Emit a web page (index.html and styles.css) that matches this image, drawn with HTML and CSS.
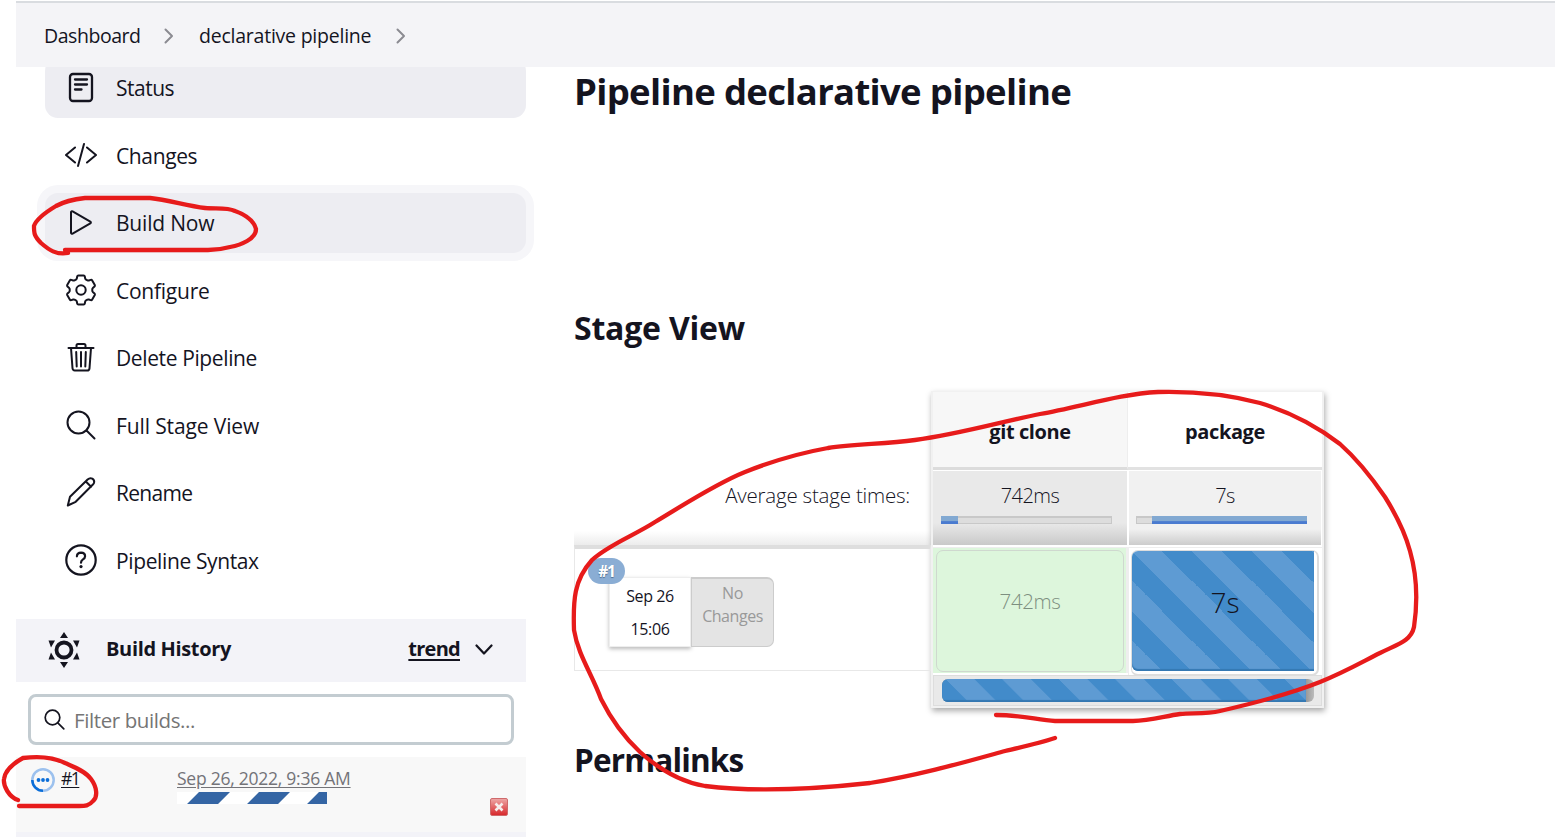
FILE: index.html
```
<!DOCTYPE html>
<html lang="en">
<head>
<meta charset="utf-8">
<title>declarative pipeline [Jenkins]</title>
<link rel="stylesheet" href="styles.css">
</head>
<body>
<header class="breadcrumbs">
  <span class="crumb crumb-home">Dashboard</span>
  <svg class="crumb-sep" width="10" height="16" viewBox="0 0 10 16"><path d="M1.500 1.500 8 8l-6.500 6.500"/></svg>
  <span class="crumb crumb-job">declarative pipeline</span>
  <svg class="crumb-sep" width="10" height="16" viewBox="0 0 10 16"><path d="M1.500 1.500 8 8l-6.500 6.500"/></svg>
</header>
<div class="page">
  <aside class="side">
    <nav class="tasks">
      <a class="task task-active task-first"><svg class="icon" viewBox="0 0 32 32"><rect x="5" y="3" width="22" height="27" rx="3" stroke-width="2.300"/><path d="M10 8.500h12M10 13.500h12M10 18.500h6.500" stroke-width="2.300"/></svg><span class="t-status">Status</span></a>
      <a class="task"><svg class="icon" viewBox="0 0 32 32"><path d="M10 8.500 1 16l9 7.500M22 8.500 31 16l-9 7.500M19 5l-6 22"/></svg><span class="t-changes">Changes</span></a>
      <a class="task task-active task-focus"><svg class="icon" viewBox="0 0 32 32"><path d="M6 6.300v20.400c0 .9.800 1.300 1.600.9l17.700-10.200c.8-.5.8-1.300 0-1.800L7.600 5.400c-.8-.4-1.600 0-1.600.9z"/></svg><span class="t-build">Build Now</span></a>
      <a class="task"><svg class="icon" viewBox="0 0 32 32"><path d="M13.400 1.500h5.200q1 0 1.200 1l.4 2.100q.2.700.8 1l1.500.8q.6.300 1.300.1l1.900-.6q1-.3 1.500.6l2.600 4.500q.4.900-.3 1.600l-1.700 1.500q-.5.500-.5 1.100v1.600q0 .6.500 1.100l1.700 1.500q.7.700.3 1.600l-2.600 4.500q-.5.900-1.500.6l-1.900-.6q-.7-.2-1.300.1l-1.500.8q-.6.300-.8 1l-.4 2.100q-.2 1-1.200 1h-5.200q-1 0-1.200-1l-.4-2.100q-.2-.7-.8-1l-1.500-.8q-.6-.3-1.300-.1l-1.900.6q-1 .3-1.500-.6l-2.600-4.500q-.4-.9.300-1.600l1.700-1.500q.5-.5.500-1.100v-1.600q0-.6-.5-1.100l-1.700-1.500q-.7-.7-.3-1.600l2.600-4.500q.5-.9 1.500-.6l1.900.6q.7.200 1.300-.1l1.500-.8q.6-.3.800-1l.4-2.100q.2-1 1.200-1z"/><circle cx="16" cy="16" r="4.700"/></svg><span class="t-configure">Configure</span></a>
      <a class="task"><svg class="icon" viewBox="0 0 32 32"><path d="M3.500 7h25M6 7l1.500 20.300q.2 2.200 2.300 2.200h12.400q2.100 0 2.300-2.200L26 7M11.500 6.500v-2Q11.500 3 13 3h6q1.500 0 1.500 1.500v2M11.200 11l.5 14.500M16 11v14.500M20.800 11l-.5 14.500"/></svg><span class="t-delete">Delete Pipeline</span></a>
      <a class="task"><svg class="icon" viewBox="0 0 32 32"><circle cx="13.500" cy="13.500" r="11"/><path d="m21.500 21.500 8 8"/></svg><span class="t-full">Full Stage View</span></a>
      <a class="task"><svg class="icon" viewBox="0 0 32 32"><path d="m2.800 29.500 2.200-8.700L22.600 3.500q2.300-2.100 4.700-.9 2.400 1.600 1.800 4-.2.900-1.200 1.900L10.700 25.800zM20.800 5.500l5.300 5.300"/></svg><span class="t-rename">Rename</span></a>
      <a class="task"><svg class="icon" viewBox="0 0 32 32"><circle cx="16" cy="16" r="14.700" stroke-width="2.200"/><path d="M11.900 12.300q.2-3.600 4.200-3.600 3.900.1 4 3.500 0 2-2.400 3.400-1.700 1.100-1.700 3.100" stroke-width="2.200"/><circle class="solid" cx="16" cy="22.600" r="1.600"/></svg><span class="t-syntax">Pipeline Syntax</span></a>
    </nav>
    <section class="history">
      <div class="history-head">
        <svg class="sun" width="32" height="38" viewBox="0 0 32 38"><circle cx="16" cy="19" r="7.500"/><path d="M16 1l4 6h-8zM16 37l-4-6h8zM.5 9.500h6.500L3 16.500zM31.500 9.500H25l4 7zM.5 28.500h6.500L3 21.500zM31.500 28.500H25l4-7z"/></svg>
        <h2 class="history-title">Build History</h2>
        <a class="trend">trend</a>
        <svg class="chevron" width="18" height="12" viewBox="0 0 18 12"><path d="m1.500 1.500 7.500 8 7.500-8"/></svg>
      </div>
      <div class="filter">
        <svg class="filter-icon" width="22" height="22" viewBox="0 0 22 22"><circle cx="8.500" cy="8.500" r="7.300"/><path d="m13.800 13.800 6 6"/></svg>
        <span class="filter-text">Filter builds...</span>
      </div>
      <div class="build">
        <svg class="build-ball" width="24" height="24" viewBox="0 0 24 24"><circle class="ring" cx="12" cy="12" r="10.700"/><path class="arc" d="M1.300 12A10.700 10.700 0 0 0 12 22.700"/><circle class="dot" cx="7.500" cy="12" r="1.900"/><circle class="dot" cx="12" cy="12" r="1.900"/><circle class="dot" cx="16.500" cy="12" r="1.900"/></svg>
        <a class="build-number">#1</a>
        <div class="build-info">
          <a class="build-date">Sep 26, 2022, 9:36 AM</a>
          <svg class="build-bar" width="150" height="12" viewBox="0 0 150 12"><path d="M10 12 22 0h31L41 12zM70 12 82 0h31l-12 12zM130 12l12-12h31l-12 12z"/></svg>
        </div>
        <span class="stop"><svg width="10" height="10" viewBox="0 0 10 10"><path d="m1.500 1.500 7 7m0-7-7 7"/></svg></span>
      </div>
    </section>
  </aside>
  <main class="main">
    <h1 class="title">Pipeline declarative pipeline</h1>
    <h2 class="subtitle">Stage View</h2>
    <div class="stage-view">
      <div class="left">
        <div class="average">Average stage times:</div>
        <div class="run">
          <span class="badge">#1</span>
          <div class="run-date"><span>Sep 26</span><span>15:06</span></div>
          <div class="run-changes"><span>No</span><span>Changes</span></div>
        </div>
      </div>
      <div class="stages">
        <div class="name name-clone">git clone</div>
        <div class="name">package</div>
        <div class="time time-clone"><span>742ms</span><div class="meter"><i class="fill fill-clone"></i></div></div>
        <div class="time"><span>7s</span><div class="meter"><i class="fill fill-package"></i></div></div>
        <div class="cell cell-ok"><div class="ok">742ms</div></div>
        <div class="cell"><div class="running"><div class="stripes">7s</div></div></div>
        <div class="total"><div class="total-track"><div class="total-fill"></div></div></div>
      </div>
    </div>
    <h2 class="permalinks">Permalinks</h2>
  </main>
</div>
<svg class="ink" width="1555" height="837" viewBox="0 0 1555 837">
  <path d="M68 253C56 255 49 250 41 243C34 236 34 233 34 226C36 220 46 212 56 206C65 201 76 199 85 198H150C169 200 187 206 205 208C216 209 227 207 235 211C246 215 254 221 256 229C256 239 241 245 230 247C223 249 216 250 208 250H65"/>
  <path d="M18 800C9 797 3 786 4 779C5 770 14 763 23 758C38 756 53 757 65 763C74 767 85 771 91 779C97 787 98 797 93 801C89 806 85 806 79 806H19"/>
  <path d="M996 715C1020 715 1038 720 1055 721H1133C1150 721 1165 716 1180 714C1195 713 1207 714 1220 711C1255 703 1290 694 1320 682C1345 672 1362 662 1380 653C1398 644 1411 641 1414 627C1418 600 1416 572 1410 551C1404 529 1395 513 1385 497C1372 478 1357 459 1340 444C1318 427 1290 412 1260 403C1230 395 1200 391 1158 392C1120 394 1080 407 1040 414C1000 422 960 434 915 440C885 444 855 444 828 448C800 453 770 462 745 472C715 484 682 506 655 522C635 535 608 545 592 560C574 580 573 600 574 630C578 655 592 674 601 699C612 721 625 738 640 752C660 770 680 782 705 786C760 793 825 788 870 783C920 775 965 762 1005 751C1022 747 1040 743 1055 738"/>
</svg>
</body>
</html>
```
FILE: styles.css
```
* { box-sizing: border-box; }
body { margin: 0; width: 1555px; height: 837px; overflow: hidden; position: relative; background: #fff; color: #14141f; font-family: "Open Sans", "Noto Sans", sans-serif; }
h1, h2 { margin: 0; font-weight: 700; }
svg { display: block; flex: none; fill: none; stroke: #14141f; stroke-linecap: round; stroke-linejoin: round; }

.breadcrumbs { height: 66px; margin: 1px 0 0 16px; padding: 1px 0 0 28px; display: flex; align-items: center; background: #f4f4f7; border-top: 2px solid #d9dce0; font-size: 19.500px; position: relative; z-index: 1; }
.crumb { white-space: nowrap; letter-spacing: -.23px; }
.crumb-home { width: 120px; letter-spacing: -.45px; }
.crumb-job { width: 197px; margin-left: 25px; }
.crumb-sep { stroke: #8b8b92; stroke-width: 2; }
.page { display: flex; height: 770px; }

.side { width: 510px; margin-left: 16px; flex: none; }
.tasks { padding-left: 29px; display: flex; flex-direction: column; gap: 7.500px; margin-top: -9px; }
.task { height: 60px; padding-left: 20px; display: flex; align-items: center; gap: 19px; border-radius: 13px; font-size: 21px; letter-spacing: -.38px; white-space: nowrap; }
.task-active { background: #ededf2; }
.task-focus { box-shadow: 0 0 0 8px #f6f6f9; }
.icon { width: 32px; height: 32px; stroke-width: 2; position: relative; top: -1px; }
.solid { fill: #14141f; stroke: none; }
.t-status { letter-spacing: -.5px; }
.t-build { letter-spacing: -.2px; }
.t-configure { letter-spacing: -.25px; }
.t-full { letter-spacing: -.12px; }
.t-rename { letter-spacing: -.7px; }

.history { margin-top: 28.500px; }
.history-head { height: 63px; padding: 0 33px 2px 32px; display: flex; align-items: center; background: #f3f3f8; }
.sun circle { stroke-width: 3.800; }
.sun path { fill: #14141f; stroke: none; }
.history-title { font-size: 20px; letter-spacing: -.35px; margin: -3px 0 0 26px; flex: 1; }
.trend { font-size: 20px; font-weight: 700; letter-spacing: -.75px; margin-top: -3px; text-decoration: underline; text-underline-offset: 3px; text-decoration-thickness: 2px; }
.chevron { margin-left: 15px; stroke-width: 2.200; }
.filter { height: 51px; margin: 12px 12px 12px; display: flex; align-items: center; padding-left: 13px; gap: 8px; border: 3px solid #c3ccd1; border-radius: 8px; color: #757575; font-size: 20.500px; letter-spacing: -.4px; }
.filter-text { padding-bottom: 0; }
.filter-icon { stroke-width: 1.700; }
.build { height: 80px; background: #f8f8f8; border-bottom: 5px solid #f3f3f8; display: flex; align-items: flex-start; padding-right: 18px; }
.build-ball { margin: 11px 0 0 15px; }
.ring { stroke: #9cc1ee; stroke-width: 2.500; }
.arc { stroke: #0b6ed8; stroke-width: 2.500; stroke-linecap: butt; }
.dot { fill: #0b6ed8; stroke: none; }
.build-number, .build-date { font-size: 17.500px; line-height: 24px; text-decoration: underline; text-underline-offset: 2px; white-space: nowrap; }
.build-number { width: 116px; margin: 9px 0 0 6px; letter-spacing: -1.500px; }
.build-info { flex: 1; padding-top: 10px; }
.build-date { color: #737378; display: block; height: 25px; letter-spacing: -.25px; position: relative; top: -1px; }
.build-bar { background: #fff; }
.build-bar path { fill: #3465a4; stroke: none; }
.stop { width: 18px; height: 18px; margin-top: 41px; display: flex; align-items: center; justify-content: center; background: linear-gradient(#eda5a5, #d8292d); border: 1px solid #cf6a6c; border-radius: 2px; }
.stop svg { stroke: #f6eded; stroke-width: 2.600; stroke-linecap: butt; }

.main { padding-left: 48px; flex: 1; }
.title { font-size: 36.500px; line-height: 48px; letter-spacing: -.68px; }
.subtitle { font-size: 32px; line-height: 40px; letter-spacing: -.2px; margin-top: 193px; }
.stage-view { display: flex; margin-top: 43px; height: 317px; }
.left { width: 357px; }
.average { height: 154px; padding: 90px 21px 0 0; text-align: right; font-size: 20.500px; line-height: 28px; font-weight: 350; letter-spacing: -.2px; background: linear-gradient(#fff 140px, #ececec 154px); }
.run { height: 126px; display: flex; align-items: flex-start; padding: 28px 0 0 34px; border: 1px solid #e8e8e8; border-top: 4px solid #dedede; position: relative; }
.badge { position: absolute; left: 13px; top: 9px; width: 37px; height: 26px; border-radius: 13px; background: #8aadd4; color: #fff; font-size: 15.500px; font-weight: 700; line-height: 27px; text-align: center; letter-spacing: -1.200px; text-shadow: 0 1px 1px #4d6d91; z-index: 1; }
.run-date { width: 82px; height: 70px; background: #fff; border: 1px solid #eee; box-shadow: 0 2px 4px #bbb; display: flex; flex-direction: column; align-items: center; font-size: 16px; line-height: 33px; padding-top: 2px; letter-spacing: -.4px; }
.run-changes { width: 83px; height: 70px; background: #e4e4e4; border: 1px solid #ccc; border-width: 2px 1px 1px; border-radius: 0 7px 7px 0; display: flex; flex-direction: column; align-items: center; font-size: 16px; line-height: 23px; padding-top: 3px; color: #999; letter-spacing: -.45px; }

.stages { width: 393px; display: grid; grid-template-columns: 195px 194px; grid-template-rows: 78px 77px 128px 31px; background: #fff; border: 2px solid #f1f1f1; border-width: 1px 2px 2px; box-shadow: 1px 3px 6px #aaa; }
.name { display: flex; align-items: center; justify-content: center; font-size: 20px; font-weight: 700; letter-spacing: -.4px; border-bottom: 3px solid #e2e2e2; padding-top: 3px; }
.name-clone { background: #f7f7f7; border-right: 1px solid #eee; border-bottom-color: #dcdcdc; }
.time { margin: 1px 1px 2px 1px; padding: 11px 14px 0 7px; background: linear-gradient(#f1f1f1 58px, #ccc); font-size: 20px; font-weight: 350; line-height: 28px; }
.time-clone { margin: 1px 1px 2px 0; padding-left: 8px; padding-right: 15px; background: linear-gradient(#e9e9e9 52px, #c9c9c9); }
.time span { display: block; text-align: center; padding-left: 7px; letter-spacing: -.5px; }
.meter { height: 8px; margin-top: 6px; background: #ddd; border: 1px solid #c8c8c8; border-top-width: 2px; display: flex; }
.fill { height: 8px; margin-top: -2px; background: linear-gradient(#82a9d2 60%, #4a7bd0 70%); }
.fill-clone { width: 17px; margin-left: -1px; }
.fill-package { width: 155px; margin: -2px -1px 0 auto; }
.cell { padding: 3px 3px 4px; border-left: 1px solid #eee; border-top: 1px solid #eee; }
.cell-ok { background: #ddf6dc; border-left: 0; border-right: 2px solid #eee; margin-bottom: 2px; padding: 2px 2px 2px 3px; }
.ok { height: 122px; border: 1px solid #cfd8cf; border-radius: 7px; color: #7d8f80; font-size: 20.500px; font-weight: 350; line-height: 100px; text-align: center; letter-spacing: -.4px; }
.running { width: 188px; height: 126px; margin: -1px 0 0 -1px; border: 1px solid #ddd; border-right-width: 2px; border-bottom-width: 2px; border-radius: 7px; background: #fff; position: relative; z-index: 1; }
.stripes { width: 182px; height: 120px; border-radius: 6px 0 0 6px; padding-left: 4px; color: #14141f; font-size: 28px; line-height: 102px; font-weight: 350; text-align: center; background: linear-gradient(45deg, #5e9bd3 25%, #428bca 25% 50%, #5e9bd3 50% 75%, #428bca 75%) 0 0 / 60px 60px; box-shadow: inset 0 -2px 1px #3578b2; }
.total { grid-column: span 2; background: #e9e9e9; border: 1px solid #ddd; padding: 3px 8px; }
.total-track { width: 372px; height: 23px; border-radius: 6px; overflow: hidden; background: linear-gradient(90deg, #999 364px, #bbb); }
.total-fill { width: 364px; height: 23px; background: linear-gradient(45deg, #5e9bd3 25%, #428bca 25% 50%, #5e9bd3 50% 75%, #428bca 75%) 4px 0 / 56.500px 56.500px; box-shadow: inset 0 -2px 1px #3578b2; }
.permalinks { font-size: 31.500px; line-height: 40px; letter-spacing: -.85px; margin-top: 32px; }

.ink { position: absolute; left: 0; top: 0; z-index: 5; stroke: #e71b1b; stroke-width: 4.300; pointer-events: none; }
```
